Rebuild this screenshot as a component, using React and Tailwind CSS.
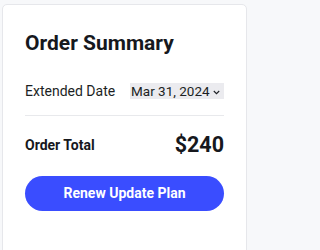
export default function App() {
  return (
    <div className="min-h-[250px] h-[250px] overflow-hidden bg-[#f7f8fa] pt-[4px] pl-[2px]" style={{ fontFamily: 'Roboto, "Noto Sans", sans-serif' }}>
      <div className="w-[245px] h-[300px] bg-white border border-[#e6e7eb] rounded-[5px] px-[22px] pt-[25px]">
        <h1 className="text-[21px] leading-[26px] font-bold text-[#16181d]">Order Summary</h1>
        <div className="mt-[27px] flex items-center justify-between h-[16px]">
          <span className="text-[14px] text-[#1c1f24]">Extended Date</span>
          <div className="h-[16px] w-[94px] bg-[#ebebef] flex items-center pl-[1px] text-[13.5px] text-[#1c1f24]">
            <span>Mar 31, 2024</span>
            <svg className="ml-[3px] mt-[2px]" width="7" height="5" viewBox="0 0 7 5" fill="none">
              <path d="M0.8 1 L3.5 3.7 L6.2 1" stroke="#1c1f24" strokeWidth="1.1" />
            </svg>
          </div>
        </div>
        <div className="mt-[16px] h-px bg-[#e8e9ec]" />
        <div className="mt-[13px] flex items-center justify-between">
          <span className="text-[14px] font-bold text-[#16181d]">Order Total</span>
          <span className="text-[21.5px] font-bold text-[#16181d]">$240</span>
        </div>
        <button className="mt-[15px] w-full h-[35px] rounded-full bg-[#3a4dff] text-white text-[14px] font-bold">Renew Update Plan</button>
      </div>
    </div>
  );
}
